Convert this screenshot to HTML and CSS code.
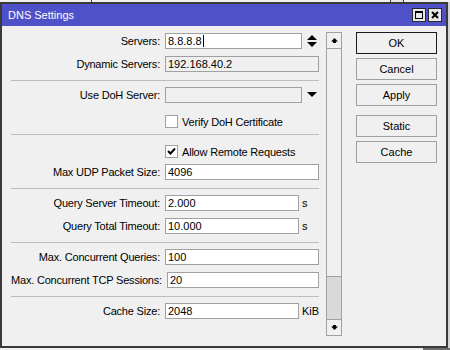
FILE: index.html
```html
<!DOCTYPE html>
<html lang="en">
<head>
 <meta charset="UTF-8">
 <meta name="viewport" content="width=device-width, initial-scale=1.0">
 <title>DNS Settings</title>
 <link rel="stylesheet" href="styles.css">
</head>
<body>
 <div class="desk-top">
 <span class="desk-edge"></span>
 <span class="desk-box"></span>
 </div>

 <div class="desk-row">
 <div class="window">
 <div class="titlebar">
 <span class="title">DNS Settings</span>
 <div class="title-btns">
 <span class="tbtn">
 <svg width="8" height="8" viewBox="0 0 8 8"><rect x="0.5" y="0.5" width="7" height="7" fill="none" stroke="#000"/><rect x="0" y="0" width="8" height="2" fill="#000"/></svg>
 </span>
 <span class="tbtn">
 <svg width="8" height="8" viewBox="0 0 8 8"><path d="M1 1 L7 7 M7 1 L1 7" stroke="#000" stroke-width="2"/></svg>
 </span>
 </div>
 </div>

 <div class="client">
 <div class="form">
 <div class="row">
 <span class="lbl">Servers:</span>
 <div class="input w-short">8.8.8.8<span class="caret"></span></div>
 <svg class="side-icon" width="10" height="13" viewBox="0 0 10 13"><polygon points="5,0 10,5 0,5" fill="#000"/><polygon points="0,7 10,7 5,12" fill="#000"/></svg>
 </div>
 <div class="row gap">
 <span class="lbl">Dynamic Servers:</span>
 <div class="input w-full disabled">192.168.40.2</div>
 </div>

 <div class="sep"></div>

 <div class="row">
 <span class="lbl">Use DoH Server:</span>
 <div class="input w-short disabled"></div>
 <svg class="side-icon" width="10" height="6" viewBox="0 0 10 6"><polygon points="0,0 10,0 5,5" fill="#000"/></svg>
 </div>
 <div class="row check verify">
 <span class="lbl"></span>
 <span class="box"></span>
 <span class="check-text">Verify DoH Certificate</span>
 </div>

 <div class="sep tight"></div>

 <div class="row check allow">
 <span class="lbl"></span>
 <span class="box">
 <svg width="11" height="11" viewBox="0 0 11 11"><path d="M2 5 L4.5 7.5 L9 2.5" fill="none" stroke="#000" stroke-width="2"/></svg>
 </span>
 <span class="check-text">Allow Remote Requests</span>
 </div>
 <div class="row udp">
 <span class="lbl">Max UDP Packet Size:</span>
 <div class="input w-full">4096</div>
 </div>

 <div class="sep"></div>

 <div class="row">
 <span class="lbl">Query Server Timeout:</span>
 <div class="input w-unit">2.000</div>
 <span class="unit">s</span>
 </div>
 <div class="row gap">
 <span class="lbl">Query Total Timeout:</span>
 <div class="input w-unit">10.000</div>
 <span class="unit">s</span>
 </div>

 <div class="sep"></div>

 <div class="row">
 <span class="lbl">Max. Concurrent Queries:</span>
 <div class="input w-full">100</div>
 </div>
 <div class="row gap">
 <span class="lbl">Max. Concurrent TCP Sessions:</span>
 <div class="input w-full">20</div>
 </div>

 <div class="sep"></div>

 <div class="row">
 <span class="lbl">Cache Size:</span>
 <div class="input w-unit">2048</div>
 <span class="unit">KiB</span>
 </div>
 </div>

 <div class="scrollbar">
 <div class="sb-btn">
 <svg width="7" height="5" viewBox="0 0 7 5"><polygon points="3.5,0 7,3.5 5,3.5 5,5 2,5 2,3.5 0,3.5" fill="#000"/></svg>
 </div>
 <div class="sb-track"></div>
 <div class="sb-thumb"></div>
 <div class="sb-btn">
 <svg width="7" height="5" viewBox="0 0 7 5"><polygon points="2,0 5,0 5,1.5 7,1.5 3.5,5 0,1.5 2,1.5" fill="#000"/></svg>
 </div>
 </div>

 <div class="buttons">
 <button class="btn default">OK</button>
 <button class="btn">Cancel</button>
 <button class="btn">Apply</button>
 <button class="btn spaced">Static</button>
 <button class="btn">Cache</button>
 </div>
 </div>
 </div>
 <div class="desk-side"></div>
 </div>
 <div class="desk-bottom"></div>
</body>
</html>
```

FILE: styles.css
```css
body {
margin: 0;
width: 450px;
height: 350px;
overflow: hidden;
background-color: #f0f0f0;
font-family: "Liberation Sans", Arial, sans-serif;
font-size: 11px;
color: #000;
}
.desk-top {
height: 2px;
display: flex;
}
.desk-edge {
margin-left: 91px;
width: 1px;
background: #3a3a3a;
}
.desk-box {
margin-left: 298px;
width: 12px;
border-left: 1px solid #3a3a3a;
border-right: 1px solid #3a3a3a;
background: #e4e4e4;
}
.desk-row {
display: flex;
}
.window {
width: 448px;
height: 346px;
box-sizing: border-box;
border: 2px solid #3a3a3a;
display: flex;
flex-direction: column;
background: #f0f0f0;
}
.desk-side {
width: 2px;
background: #d4d4d4;
}
.desk-bottom {
height: 2px;
background: linear-gradient(to right, #f0f0f0 423px, #6d6d6d 423px);
}
.titlebar {
height: 22px;
background: #4f51c9;
display: flex;
align-items: center;
justify-content: space-between;
padding: 0 4px 0 6px;
}
.title {
color: #fff;
font-size: 11px;
}
.title-btns {
display: flex;
gap: 2px;
}
.tbtn {
width: 14px;
height: 14px;
box-sizing: border-box;
border: 1px solid #2b2b2b;
background: #e8e8e8;
display: flex;
align-items: center;
justify-content: center;
}
.client {
flex: 1;
display: flex;
align-items: flex-start;
}
.form {
width: 308px;
padding: 7px 0 0 9px;
display: flex;
flex-direction: column;
}
.row {
display: flex;
align-items: center;
height: 16px;
}
.row.gap {
margin-top: 7px;
}
.lbl {
flex: 0 0 149px;
margin-right: 5px;
text-align: right;
white-space: nowrap;
letter-spacing: -0.2px;
}
.input {
height: 16px;
box-sizing: border-box;
border: 1px solid #a0a0a0;
background: #fff;
padding: 0 2px;
line-height: 14px;
white-space: nowrap;
display: flex;
align-items: center;
}
.input.disabled {
background: #f0f0f0;
}
.w-full { width: 154px; }
.w-short { width: 137px; }
.w-unit { width: 134px; }
.caret {
display: inline-block;
width: 1px;
height: 12px;
background: #000;
margin-left: 1px;
}
.side-icon {
margin-left: 5px;
}
.unit {
margin-left: 3px;
}
.sep {
height: 1px;
background: #bcbcbc;
margin: 8px 0 6px;
}
.sep.tight {
margin-top: 6px;
}
.row.check {
height: 13px;
}
.row.verify {
margin-top: 12px;
}
.row.allow {
margin-top: 4px;
}
.row.udp {
margin-top: 6px;
}
.box {
width: 13px;
height: 13px;
box-sizing: border-box;
border: 1px solid #a0a0a0;
background: #fff;
display: flex;
align-items: center;
justify-content: center;
}
.check-text {
margin-left: 4px;
letter-spacing: -0.2px;
}
.scrollbar {
margin: 6px 0 0 7px;
width: 16px;
height: 304px;
box-sizing: border-box;
border: 1px solid #a0a0a0;
display: flex;
flex-direction: column;
}
.sb-btn {
height: 15px;
display: flex;
align-items: center;
justify-content: center;
background: #f0f0f0;
}
.sb-track {
flex: 1;
border-top: 1px solid #a0a0a0;
background: #f0f0f0;
}
.sb-thumb {
height: 42px;
border-top: 1px solid #a0a0a0;
border-bottom: 1px solid #a0a0a0;
background: #d9d9d9;
}
.buttons {
margin: 6px 0 0 14px;
width: 81px;
display: flex;
flex-direction: column;
gap: 4px;
}
.btn {
height: 22px;
box-sizing: border-box;
border: 1px solid #a0a0a0;
background: #f0f0f0;
font-family: inherit;
font-size: 11px;
color: #000;
padding: 0;
}
.btn.default {
border-color: #1a1a1a;
}
.btn.spaced {
margin-top: 5px;
}
```
